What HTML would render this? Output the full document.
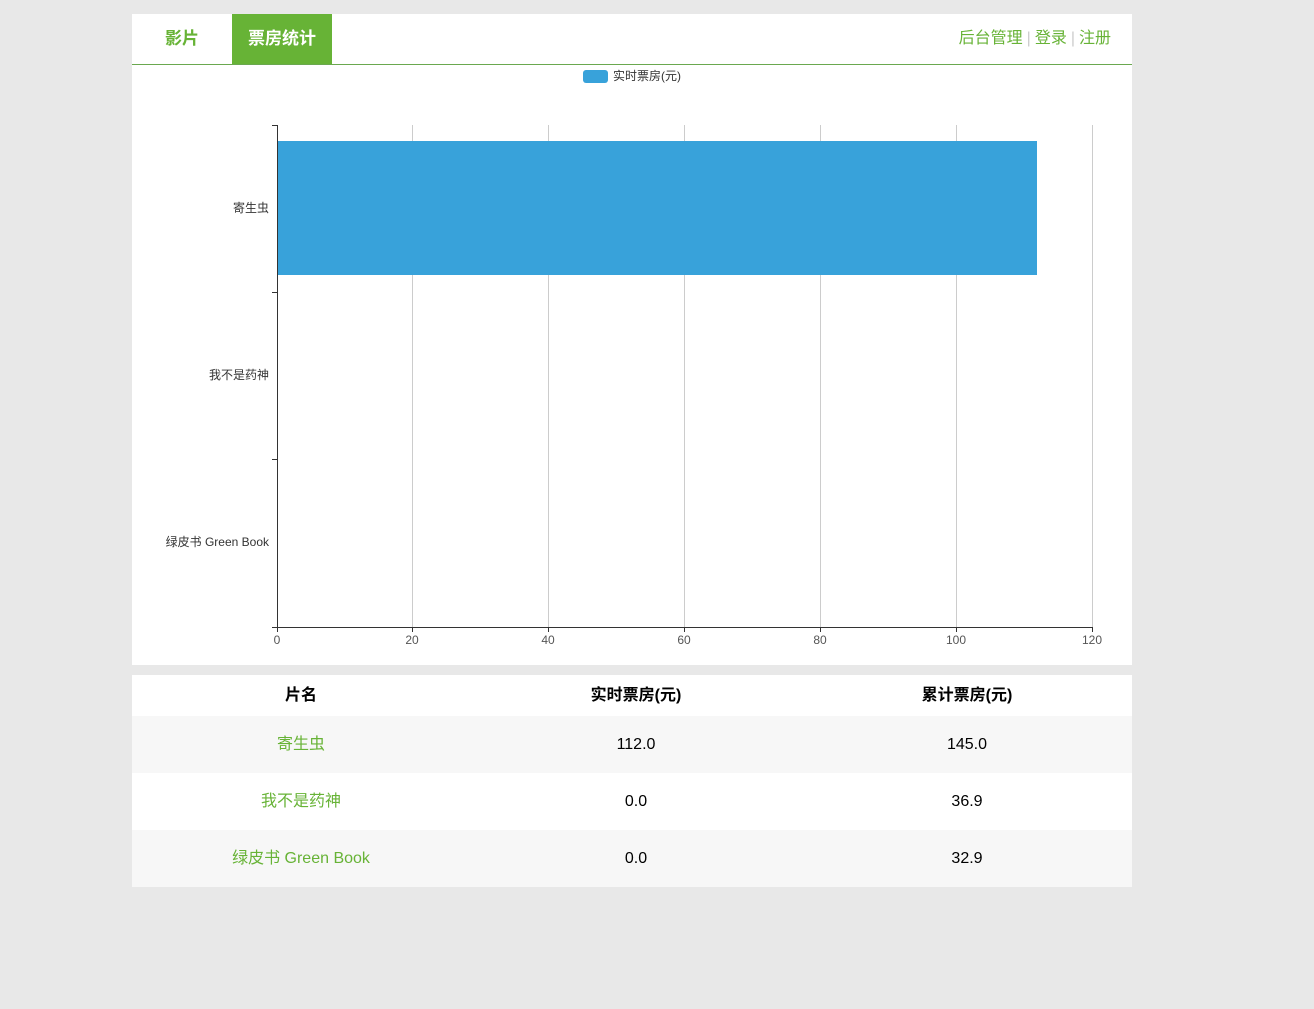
<!DOCTYPE html>
<html><head><meta charset="utf-8"><style>
body{margin:0;background:#e8e8e8;font-family:"Liberation Sans","Noto Sans CJK SC",sans-serif;width:1314px;height:1009px;position:relative;overflow:hidden}
.box{position:absolute;left:132px;width:1000px;background:#fff}
.nav{top:14px;height:50px;border-bottom:1px solid #6aa84f}
.tab{position:absolute;top:0;height:50px;width:100px;line-height:50px;text-align:center;font-size:17px;font-weight:bold;color:#67b336}
.tab.on{background:#67b336;color:#fff}
.right{position:absolute;right:21px;top:0;line-height:50px;font-size:16px;color:#67b336}
.right span{color:#ccc;margin:0 4px}
.chart{top:65px;height:600px}
table{position:absolute;top:675px;left:132px;width:1000px;border-collapse:collapse;border-spacing:0;background:#fff;font-size:16px}
th,td{padding:0}
th{height:41px;line-height:41px;font-weight:bold;color:#000}
td{height:57px;line-height:57px;text-align:center;color:#000}
tr.g td{background:#f7f7f7}
td.n{color:#67b336}
</style></head><body>
<div class="box nav">
<div class="tab" style="left:0">影片</div>
<div class="tab on" style="left:100px">票房统计</div>
<div class="right">后台管理<span>|</span>登录<span>|</span>注册</div>
</div>
<div class="box chart"></div>
<svg style="position:absolute;left:0;top:0" width="1314" height="670">
<rect x="583" y="70" width="25" height="13" rx="3" fill="#38a2da"/>
<g stroke="#ccc" stroke-width="1">
<line x1="412.5" y1="125" x2="412.5" y2="627"/><line x1="548.5" y1="125" x2="548.5" y2="627"/><line x1="684.5" y1="125" x2="684.5" y2="627"/><line x1="820.5" y1="125" x2="820.5" y2="627"/><line x1="956.5" y1="125" x2="956.5" y2="627"/><line x1="1092.5" y1="125" x2="1092.5" y2="627"/>
</g>
<rect x="277" y="141" width="760" height="134" fill="#38a2da"/>
<g stroke="#333" stroke-width="1">
<line x1="277.5" y1="125" x2="277.5" y2="628"/><line x1="272" y1="627.5" x2="1093" y2="627.5"/>
<line x1="272" y1="125.5" x2="277" y2="125.5"/><line x1="272" y1="292.5" x2="277" y2="292.5"/><line x1="272" y1="459.5" x2="277" y2="459.5"/>
<line x1="277.5" y1="627" x2="277.5" y2="632"/><line x1="412.5" y1="627" x2="412.5" y2="632"/><line x1="548.5" y1="627" x2="548.5" y2="632"/><line x1="684.5" y1="627" x2="684.5" y2="632"/><line x1="820.5" y1="627" x2="820.5" y2="632"/><line x1="956.5" y1="627" x2="956.5" y2="632"/><line x1="1092.5" y1="627" x2="1092.5" y2="632"/>
</g>
<g font-family="Liberation Sans,Noto Sans CJK SC,sans-serif" font-size="12" fill="#333">
<text x="613" y="80">实时票房(元)</text>
<text x="269" y="212" text-anchor="end">寄生虫</text>
<text x="269" y="379" text-anchor="end">我不是药神</text>
<text x="269" y="546" text-anchor="end">绿皮书 Green Book</text>
<g text-anchor="middle" fill="#555"><text x="277" y="644">0</text><text x="412" y="644">20</text><text x="548" y="644">40</text><text x="684" y="644">60</text><text x="820" y="644">80</text><text x="956" y="644">100</text><text x="1092" y="644">120</text></g>
</g>
</svg>
<table>
<tr><th style="width:338px">片名</th><th style="width:332px">实时票房(元)</th><th>累计票房(元)</th></tr>
<tr class="g"><td class="n">寄生虫</td><td>112.0</td><td>145.0</td></tr>
<tr><td class="n">我不是药神</td><td>0.0</td><td>36.9</td></tr>
<tr class="g"><td class="n">绿皮书 Green Book</td><td>0.0</td><td>32.9</td></tr>
</table>
</body></html>
